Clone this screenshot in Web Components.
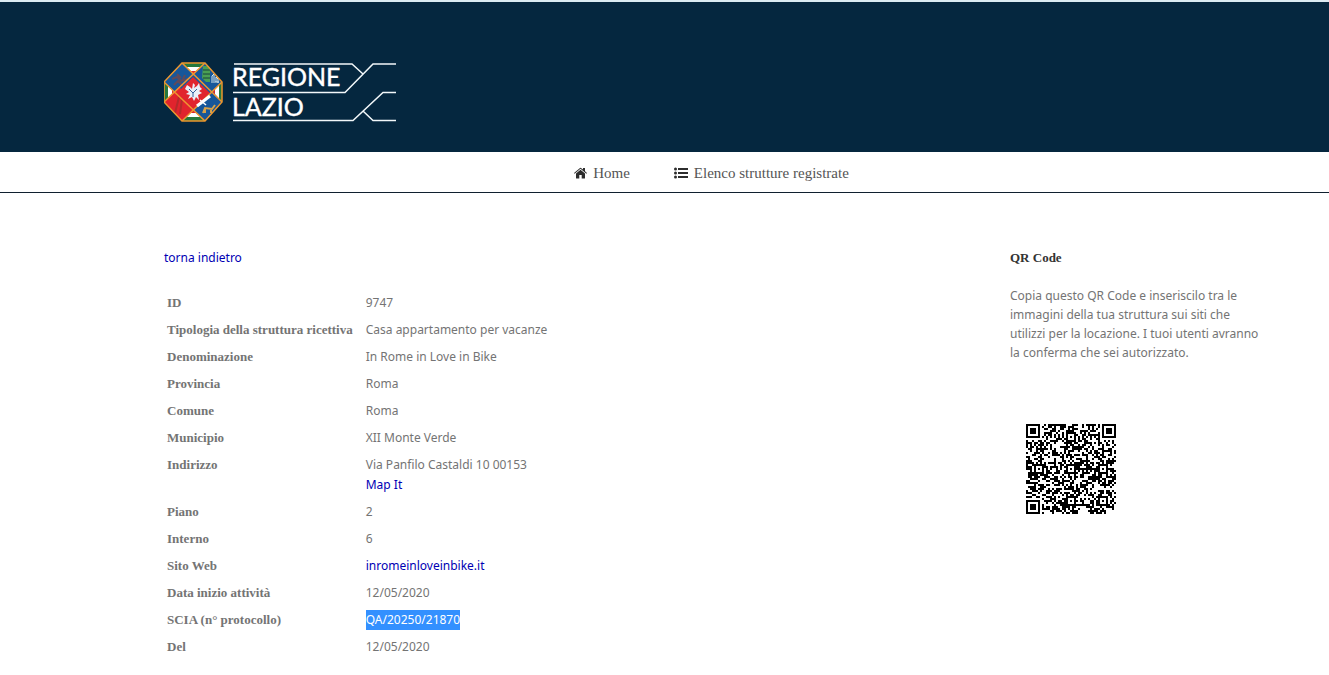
<!DOCTYPE html>
<html lang="it">
<head>
<meta charset="utf-8">
<title>Regione Lazio - Strutture registrate</title>
<style>
  body {
    margin: 0;
    background: #fff;
    color: #747474;
    font: 12px/20px "Noto Sans", sans-serif;
    --slab: "Liberation Serif", serif;
    --navy: #05273f;
    --link: #0000b4;
  }
</style>
</head>
<body>
<lazio-page>
  <site-header slot="header"></site-header>
  <site-nav slot="nav"></site-nav>
  <structure-details></structure-details>
  <qr-widget slot="aside" heading="QR Code">
    Copia questo QR Code e inseriscilo tra le immagini della tua struttura sui siti che utilizzi per la locazione. I tuoi utenti avranno la conferma che sei autorizzato.
  </qr-widget>
</lazio-page>

<script>
function makeTemplate(html) {
  const template = document.createElement("template");
  template.innerHTML = html;
  return template;
}

const pageTemplate = makeTemplate(`
  <style>
    :host { display: block; }
    .content {
      display: grid;
      grid-template-columns: minmax(0, 1fr) 256px;
      gap: 40px;
      padding: 55px 63px 16px 164px;
    }
  </style>
  <slot name="header"></slot>
  <slot name="nav"></slot>
  <div class="content">
    <main><slot></slot></main>
    <aside><slot name="aside"></slot></aside>
  </div>
`);

class LazioPage extends HTMLElement {
  constructor() {
    super();
    this.attachShadow({ mode: "open" }).appendChild(pageTemplate.content.cloneNode(true));
  }
}

const headerTemplate = makeTemplate(`
  <style>
    :host {
      display: block;
      padding: 60px 164px 30px;
      border-top: 2px solid #dcebf2;
      background: var(--navy);
    }
    svg { display: block; }
    text { font: 25px Lato, sans-serif; fill: #fff; stroke: #fff; stroke-width: .4; }
  </style>
  <svg width="232" height="60" viewBox="0 0 232 60" role="img" aria-label="Regione Lazio">
    <clipPath id="oct"><path d="M18 1H41L58 20V40L41 59H18L0 40V20Z"/></clipPath>
    <g clip-path="url(#oct)">
      <path fill="#26783c" d="M0 0H59V60H0Z"/>
      <path fill="#fff" d="M4 5H55V55H4Z"/>
      <path fill="#dc2430" d="M8 9H51V51H8Z"/>
      <path fill="#17579a" d="M18 1L0 20L15 35L34 17Z"/>
      <path fill="#17579a" d="M41 1L58 20L44 35L25 17Z"/>
      <path fill="#e1242d" d="M0 40L15 25L34 43L18 59Z"/>
      <path fill="#17579a" d="M58 40L49 30L29 48L41 59Z"/>
      <path fill="#e1242d" d="M29 15L46 31L30 47L13 31Z"/>
      <path fill="#4a9f52" d="M39 4H46V20H42L38 16Z"/>
      <path stroke="#17423d" d="M39 8H46M39 12H46M39 16H46"/>
      <path stroke="#d4e7ec" fill="none" d="M48 19V14L50 12V19M52 20V15L54 17V21M47 20H55"/>
      <path stroke="#604a5b" stroke-width="2" fill="none" d="M8 17L13 15L17 19L24 17M13 12L17 16M10 23L14 19L19 24M21 13L18 19"/>
      <path stroke="#b52a2b" stroke-width="2" fill="none" d="M15 35L11 51M18 37L16 52"/>
      <path stroke="#d7a24a" stroke-width="2" fill="none" d="M39 51L41 46L48 47L51 43M41 46V51M47 47V51"/>
      <path stroke="#ee9630" stroke-width="1.5" fill="none" d="M18 1L58 40M41 1L0 40M0 20L41 59M58 20L18 59"/>
    </g>
    <path fill="#e9eef7" d="M29 21L31 23L30 26L33 24L35 21L36 25L38 27L35 29L38 31L34 33L35 38L32 35L30 39L28 35L24 37L26 33L22 32L25 30L21 27L23 23L26 25L28 27Z"/>
    <path stroke="#315f9b" fill="none" d="M25 27L29 31L33 27M29 31V35"/>
    <path stroke="#fff" stroke-width="3" d="M33 44L46 34"/>
    <path stroke="#fff" stroke-width="1.5" d="M36 38L42 43"/>
    <path stroke="#eb962e" stroke-width="1.5" fill="none" d="M18 1H41L58 20V40L41 59H18L0 40V20Z"/>
    <text x="68" y="24">REGIONE</text>
    <text x="68" y="54">LAZIO</text>
    <path stroke="#f3f8fa" stroke-width="1.5" fill="none" d="M70 2H188L199 12M69 30.500H181L209 2H232M69 58.500H189L219 30.500H232M199 49L209 58.500H232"/>
  </svg>
`);

class SiteHeader extends HTMLElement {
  constructor() {
    super();
    this.attachShadow({ mode: "open" }).appendChild(headerTemplate.content.cloneNode(true));
  }
}

const navTemplate = makeTemplate(`
  <style>
    :host { display: block; border-bottom: 1px solid #10202f; }
    nav {
      display: flex;
      justify-content: center;
      gap: 44px;
      padding: 11px 0 9px 94px;
    }
    a {
      display: flex;
      align-items: center;
      gap: 6px;
      color: #555;
      font: 15px/20px var(--slab);
      text-decoration: none;
    }
    svg { fill: #2d2d2d; }
  </style>
  <nav>
    <a href="#home">
      <svg width="13" height="12" viewBox="0 0 13 12"><path d="M6.500 2.800L2 6.600V11Q2 11.500 2.500 11.500H5.300V8H7.700V11.500H10.500Q11 11.500 11 11V6.600ZM0 6L6 .9Q6.500.5 7 .9L9 2.600V1H11V4.300L13 6L12.400 6.700L6.500 1.800L.6 6.700Z"/></svg>
      Home
    </a>
    <a href="#elenco">
      <svg width="14" height="12" viewBox="0 0 14 12"><path d="M4 1H14V3H4ZM4 5H14V7H4ZM4 9H14V11H4Z"/><circle cx="1.500" cy="2" r="1.500"/><circle cx="1.500" cy="6" r="1.500"/><circle cx="1.500" cy="10" r="1.500"/></svg>
      Elenco strutture registrate
    </a>
  </nav>
`);

class SiteNav extends HTMLElement {
  constructor() {
    super();
    this.attachShadow({ mode: "open" }).appendChild(navTemplate.content.cloneNode(true));
  }
}

const detailsTemplate = makeTemplate(`
  <style>
    :host { display: block; }
    a { color: var(--link); text-decoration: none; }
    table { margin-top: 21px; border-spacing: 2px 1px; }
    th, td { padding: 3px 1px; vertical-align: top; text-align: left; }
    th { padding-right: 10px; font: bold 13px/20px var(--slab); white-space: nowrap; }
    mark { display: inline-block; background: #3390ff; color: #fff; }
  </style>
  <a href="#indietro">torna indietro</a>
  <table><tbody></tbody></table>
`);

const details = [
  ["ID", "9747"],
  ["Tipologia della struttura ricettiva", "Casa appartamento per vacanze"],
  ["Denominazione", "In Rome in Love in Bike"],
  ["Provincia", "Roma"],
  ["Comune", "Roma"],
  ["Municipio", "XII Monte Verde"],
  ["Indirizzo", `Via Panfilo Castaldi 10 00153<br><a href="#map">Map It</a>`],
  ["Piano", "2"],
  ["Interno", "6"],
  ["Sito Web", `<a href="#sito">inromeinloveinbike.it</a>`],
  ["Data inizio attività", "12/05/2020"],
  ["SCIA (n° protocollo)", "<mark>QA/20250/21870</mark>"],
  ["Del", "12/05/2020"]
];

class StructureDetails extends HTMLElement {
  constructor() {
    super();
    this._sR = this.attachShadow({ mode: "open" });
    this._sR.appendChild(detailsTemplate.content.cloneNode(true));
    this._sR.querySelector("tbody").innerHTML = details
      .map(([label, value]) => `<tr><th scope="row">${label}</th><td>${value}</td></tr>`)
      .join("");
  }
}

const widgetTemplate = makeTemplate(`
  <style>
    :host { display: block; }
    h4 { margin: 0 0 18px; color: #333; font: bold 13px/20px var(--slab); }
    p { margin: 0; line-height: 19px; }
    qr-code { margin: 62px 0 0 16px; }
  </style>
  <h4></h4>
  <p><slot></slot></p>
  <qr-code></qr-code>
`);

class QrWidget extends HTMLElement {
  constructor() {
    super();
    this._sR = this.attachShadow({ mode: "open" });
    this._sR.appendChild(widgetTemplate.content.cloneNode(true));
  }

  connectedCallback() {
    this._sR.querySelector("h4").textContent = this.getAttribute("heading");
  }
}

// 45 x 45 modules, two pixels each
class QrCode extends HTMLElement {
  constructor() {
    super();
    this._sR = this.attachShadow({ mode: "open" });
    this.render();
  }

  square(cells, cx, cy, radius) {
    for (let y = -radius; y <= radius; y++) {
      for (let x = -radius; x <= radius; x++) {
        const ring = Math.max(Math.abs(x), Math.abs(y));
        if (cells[cy + y] && cx + x >= 0 && cx + x < 45) {
          cells[cy + y][cx + x] = radius === 2 ? ring !== 1 : ring !== 2 && ring !== 4;
        }
      }
    }
  }

  render() {
    let seed = 9747;
    const cells = [];
    for (let y = 0; y < 45; y++) {
      cells.push([]);
      for (let x = 0; x < 45; x++) {
        seed = (seed * 1103515245 + 12345) % 2147483648;
        cells[y].push(seed / 2147483648 < 0.52);
      }
    }
    for (let i = 8; i < 37; i++) {
      cells[6][i] = cells[i][6] = i % 2 === 0;
    }
    [[22, 6], [6, 22], [22, 22], [38, 22], [22, 38], [38, 38]].forEach(([x, y]) => this.square(cells, x, y, 2));
    [[3, 3], [41, 3], [3, 41]].forEach(([x, y]) => this.square(cells, x, y, 4));

    let path = "";
    cells.forEach((row, y) => row.forEach((on, x) => {
      if (on) path += `M${x} ${y}h1v1h-1z`;
    }));
    this._sR.innerHTML = `
      <style>:host { display: block; } svg { display: block; }</style>
      <svg width="90" height="90" viewBox="0 0 45 45" shape-rendering="crispEdges" role="img" aria-label="QR Code"><path d="${path}"/></svg>
    `;
  }
}

customElements.define("lazio-page", LazioPage);
customElements.define("site-header", SiteHeader);
customElements.define("site-nav", SiteNav);
customElements.define("structure-details", StructureDetails);
customElements.define("qr-code", QrCode);
customElements.define("qr-widget", QrWidget);
</script>
</body>
</html>
